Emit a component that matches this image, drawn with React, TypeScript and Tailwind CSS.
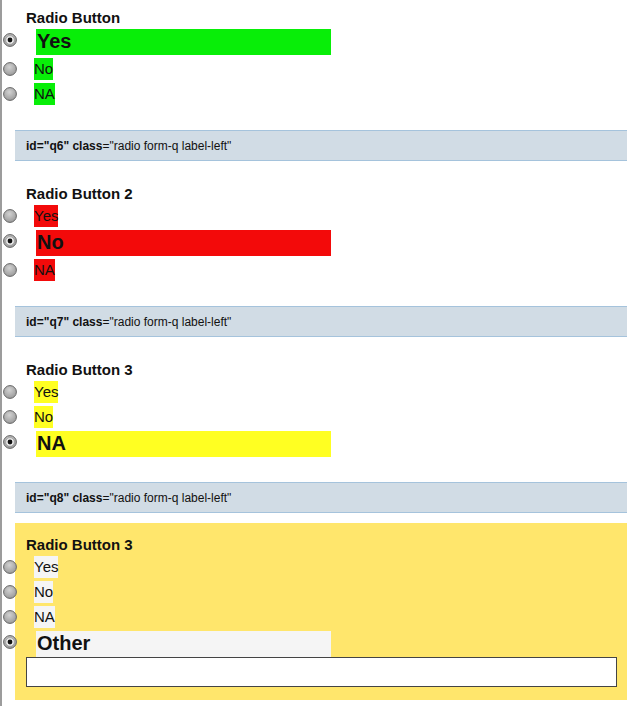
import React from "react";

type Opt = { label: string; selected?: boolean };

const Radio = ({ checked }: { checked?: boolean }) => (
  <svg width="14" height="14" viewBox="0 0 14 14" className="shrink-0">
    <defs>
      <radialGradient id="rg" cx="45%" cy="35%" r="70%">
        <stop offset="0%" stopColor="#d2d2d2" />
        <stop offset="100%" stopColor="#969696" />
      </radialGradient>
    </defs>
    <circle cx="7" cy="7" r="6.4" fill="url(#rg)" stroke="#666" strokeWidth="1" />
    {checked && (
      <>
        <circle cx="7" cy="7" r="4.3" fill="#eeeeee" stroke="#8a8a8a" strokeWidth="0.6" />
        <circle cx="7" cy="7" r="2.4" fill="#111" />
      </>
    )}
  </svg>
);

function Section({
  title,
  options,
  color,
  panel,
  first,
  other,
}: {
  title: string;
  options: Opt[];
  color: string;
  panel?: boolean;
  first?: boolean;
  other?: boolean;
}) {
  return (
    <div
      className={`flex flex-col gap-[3px] px-[11px] ${
        first
          ? "pt-[10px] pb-[12px]"
          : panel
          ? "mt-[10px] pt-[14px] pb-[13px]"
          : "mt-[11px] pt-[14px] pb-[12px]"
      } ${panel ? "bg-[#ffe66c]" : ""}`}
    >
      <div className="text-[15px] font-bold leading-[16px] text-[#111]">{title}</div>
      {options.map((o) => (
        <div key={o.label} className="flex items-center -ml-[23px]">
          {o.selected ? (
            <>
              <div className="self-start mt-[4px]">
                <Radio checked />
              </div>
              <div
                className={`ml-[19px] w-[295px] h-[26px] pl-[1px] text-[20px] leading-[25px] font-bold text-[#111] ${color}`}
              >
                {o.label}
              </div>
            </>
          ) : (
            <>
              <Radio />
              <div className={`ml-[17px] h-[22px] text-[15px] leading-[22px] text-[#111] ${color}`}>
                {o.label}
              </div>
            </>
          )}
        </div>
      ))}
      {other && (
        <input
          type="text"
          className="-mt-[3px] h-[30px] w-[591px] border border-[#444] bg-white outline-none"
        />
      )}
    </div>
  );
}

const Banner = ({ id }: { id: string }) => (
  <div className="mt-[13px] flex h-[31px] items-center border-y border-[#a5c3dc] bg-[#d1dce5] pl-[11px] text-[12px] text-[#111]">
    <b>id="{id}" class</b>="radio form-q label-left"
  </div>
);

export default function App() {
  return (
    <div
      className="min-h-[706px] border-l-2 border-[#9c9c9c] bg-white pl-[13px] pr-[8px]"
      style={{ fontFamily: '"Liberation Sans", Arial, sans-serif' }}
    >
      <Section
        first
        title="Radio Button"
        color="bg-[#08ee08]"
        options={[{ label: "Yes", selected: true }, { label: "No" }, { label: "NA" }]}
      />
      <Banner id="q6" />
      <Section
        title="Radio Button 2"
        color="bg-[#f30a0a]"
        options={[{ label: "Yes" }, { label: "No", selected: true }, { label: "NA" }]}
      />
      <Banner id="q7" />
      <Section
        title="Radio Button 3"
        color="bg-[#ffff22]"
        options={[{ label: "Yes" }, { label: "No" }, { label: "NA", selected: true }]}
      />
      <Banner id="q8" />
      <Section
        panel
        other
        title="Radio Button 3"
        color="bg-[#f5f5f5]"
        options={[{ label: "Yes" }, { label: "No" }, { label: "NA" }, { label: "Other", selected: true }]}
      />
    </div>
  );
}
